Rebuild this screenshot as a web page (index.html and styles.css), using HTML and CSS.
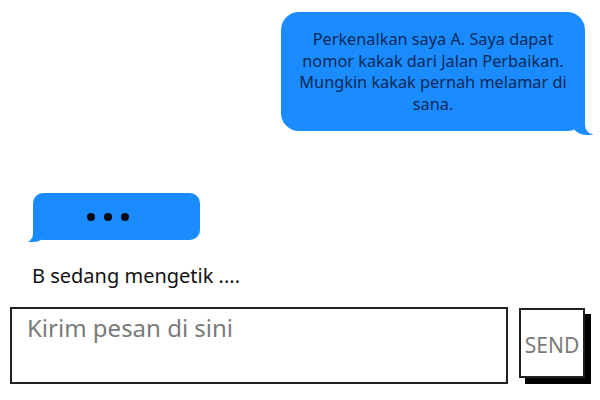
FILE: index.html
```html
<!DOCTYPE html>
<html>
<head>
    <title>Chat</title>
    <link rel="stylesheet" href="styles.css">
</head>
<body>
    <div class="chat">
        <div class="row row-out">
            <div class="bubble bubble-out">
                Perkenalkan saya A. Saya dapat<br>
                nomor kakak dari Jalan Perbaikan.<br>
                Mungkin kakak pernah melamar di<br>
                sana.
            </div>
        </div>
        <div class="row row-in">
            <div class="bubble bubble-in">
                <span class="dot"></span><span class="dot"></span><span class="dot"></span>
            </div>
        </div>
        <div class="status">B sedang mengetik ....</div>
        <div class="composer">
            <textarea class="message" placeholder="Kirim pesan di sini"></textarea>
            <button class="send">SEND</button>
        </div>
    </div>
</body>
</html>
```

FILE: styles.css
```css
body {
    margin: 0;
    background: #fff;
    font-family: "Noto Sans", sans-serif;
    color: #111;
}

.chat {
    display: flex;
    flex-direction: column;
    padding: 12px 15px 0 10px;
}

.row {
    display: flex;
}

.row-out {
    justify-content: flex-end;
}

.row-in {
    margin-top: 62px;
    padding-left: 23px;
}

.bubble {
    position: relative;
    background: #1a8cff;
    border-radius: 18px;
}

/* tail */
.bubble::before,
.bubble::after {
    content: "";
    position: absolute;
    bottom: 0;
    height: 22px;
}

.bubble-out {
    width: 304px;
    height: 119px;
    box-sizing: border-box;
    padding-top: 17px;
    text-align: center;
    font-size: 16.3px;
    line-height: 21.7px;
    color: #0b2857;
}

.bubble-out::before {
    right: -8px;
    width: 22px;
    background: #1a8cff;
    border-bottom-left-radius: 16px 14px;
    bottom: -4px;
    height: 24px;
}

.bubble-out::after {
    right: -26px;
    width: 26px;
    background: #fff;
    border-bottom-left-radius: 10px;
    bottom: -4px;
    height: 26px;
}

.bubble-in {
    width: 167px;
    height: 47px;
    box-sizing: border-box;
    padding-right: 17px;
    border-radius: 10px;
    display: flex;
    justify-content: center;
    align-items: center;
    gap: 9px;
}

.bubble-in::before {
    left: -6px;
    width: 20px;
    background: #1a8cff;
    border-bottom-right-radius: 14px 12px;
    bottom: -2px;
    height: 20px;
}

.bubble-in::after {
    left: -22px;
    width: 22px;
    background: #fff;
    border-bottom-right-radius: 9px;
    bottom: -3px;
    height: 24px;
}

.dot {
    width: 8px;
    height: 8px;
    border-radius: 50%;
    background: #0a0a14;
}

.status {
    margin-top: 22px;
    padding-left: 22px;
    font-size: 20px;
    line-height: 28px;
}

.composer {
    display: flex;
    gap: 11px;
    margin-top: 17px;
}

.message {
    width: 498px;
    height: 77px;
    box-sizing: border-box;
    border: 2px solid #222;
    padding: 2px 15px;
    font-family: "Noto Sans", sans-serif;
    font-size: 24px;
    resize: none;
    outline: none;
}

.message::placeholder {
    color: #7a7a7a;
}

.send {
    width: 66px;
    height: 70px;
    margin-top: 1px;
    box-sizing: border-box;
    border: 2px solid #222;
    background: #fff;
    box-shadow: 6px 6px 0 #000;
    font-family: "Noto Sans", sans-serif;
    font-size: 21px;
    color: #7a7a7a;
    padding: 4px 0 0;
}
```
